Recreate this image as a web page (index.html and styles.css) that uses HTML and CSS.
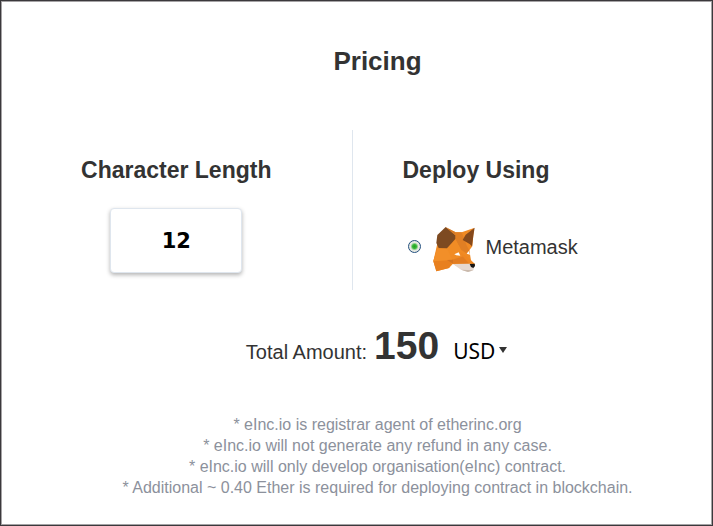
FILE: index.html
```html
<!DOCTYPE html>
<html lang="en">
<head>
    <meta charset="UTF-8">
    <meta name="viewport" content="width=device-width, initial-scale=1.0">
    <title>Pricing</title>
    <link rel="stylesheet" href="styles.css">
</head>
<body>

<main class="pricing">
    <h1 class="title">Pricing</h1>

    <div class="options">
        <div class="length">
            <h2><label for="char-length">Character Length</label></h2>
            <input class="length-input" id="char-length" type="text" value="12">
        </div>
        <div class="deploy">
            <h2>Deploy Using</h2>
            <label class="wallet">
                <input class="wallet-radio" type="radio" name="wallet" value="metamask" checked>
                <svg class="fox" viewBox="24 21 129 138" aria-hidden="true">
                    <path fill="#f08a24" d="M36 78 L63 26 L92 40 L110 40 L147 27 L142 82 L133 94 L138 124 L150 135 L146 147 L120 156 L84 134 L72 147 L34 157 L25 127 Z"/>
                    <path fill="#e07f24" d="M92 40 L110 40 L126 82 L133 94 L129 106 L108 92 L91 60 Z"/>
                    <path fill="#f18c25" d="M36 88 L66 88 L91 60 L108 92 L104 112 L84 122 L25 127 Z"/>
                    <path fill="#e8801f" d="M84 122 L25 127 L34 157 L72 147 Z"/>
                    <path fill="#f28f29" d="M25 127 L37 90 L66 88 L82 122 Z"/>
                    <path fill="#e27d22" d="M82 122 L118 111 L136 134 L84 134 Z"/>
                    <path fill="#d47422" d="M66 123 L84 122 L84 134 Z"/>
                    <path fill="#ef8722" d="M104 98 L138 124 L140 136 L134 136 L112 111 Z"/>
                    <path fill="#7d4a21" d="M62 24 L91 49 L91 60 L66 88 L41 87 L34 72 L37 48 Z"/>
                    <path fill="#85491c" d="M149 26 L145 50 L141 82 L134 75 L113 63 L122 47 Z"/>
                    <path fill="#d57a27" d="M62 24 L92 40 L91 49 Z"/>
                    <path fill="#e6d9d0" d="M84 135 L136 134 L148 143 L145 154 L129 159 L108 152 Z"/>
                    <path fill="#c9b9ac" d="M108 152 L145 154 L129 159 Z"/>
                    <path fill="#161616" d="M134 135 L149 134 L150 141 L145 147 L138 144 Z"/>
                    <path fill="#fff" d="M88 106 L101 100 L106 110 L94 109 Z"/>
                    <path fill="#fff" d="M125 104 L131 96 L135 107 Z"/>
                </svg>
                <span>Metamask</span>
            </label>
        </div>
    </div>

    <div class="total">
        <span class="total-label">Total Amount:</span>
        <strong class="total-value">150</strong>
        <span class="currency">
            <select class="currency-select" aria-label="Currency">
                <option>USD</option>
            </select>
            <svg class="caret" viewBox="0 0 8 6" aria-hidden="true"><path fill="#333" d="M0 0h8L4 6z"/></svg>
        </span>
    </div>

    <div class="notes">
        <p>* eInc.io is registrar agent of etherinc.org</p>
        <p>* eInc.io will not generate any refund in any case.</p>
        <p>* eInc.io will only develop organisation(eInc) contract.</p>
        <p>* Additional ~ 0.40 Ether is required for deploying contract in blockchain.</p>
    </div>
</main>

</body>
</html>
```

FILE: styles.css
```css
* {
    box-sizing: border-box;
}
body {
    margin: 0;
    font-family: "Liberation Sans", Arial, sans-serif;
    color: #333;
    background: #fff;
}
h1, h2, p {
    margin: 0;
}
.pricing {
    min-height: 100vh;
    padding-top: 44px;
    border: 1px solid #3b393c;
    box-shadow: inset 0 0 0 1px #a5a3a5;
}
.title {
    padding-left: 42px;
    font-size: 26px;
    line-height: 32px;
    text-align: center;
}
.options {
    display: grid;
    grid-template-columns: 1fr 1fr;
    margin-top: 53px;
    padding-right: 8px;
}
.options h2 {
    font-size: 23px;
    line-height: 32px;
}
.length {
    display: flex;
    flex-direction: column;
    align-items: center;
    gap: 22px;
    height: 160px;
    padding-top: 24px;
    border-right: 1px solid #dfe6ee;
}
.length-input {
    width: 132px;
    height: 65px;
    border: 1px solid #dfe6ee;
    border-radius: 4px;
    box-shadow: 0 2px 4px rgba(0, 0, 0, 0.3);
    background: #fff;
    color: #000;
    font-family: "DejaVu Sans", Verdana, sans-serif;
    font-size: 21px;
    font-weight: bold;
    text-align: center;
}
.deploy {
    padding: 24px 0 0 50px;
}
.wallet {
    display: flex;
    align-items: center;
    margin-top: 40px;
    padding-left: 5px;
    font-size: 20px;
}
.wallet-radio {
    appearance: none;
    width: 13px;
    height: 13px;
    margin: 0 12px 6px 0;
    border: 1px solid #24507f;
    border-radius: 50%;
    background: radial-gradient(circle, #21a121 0, #38b738 2px, #e6e9e2 4px);
}
.fox {
    width: 43px;
    height: 46px;
    margin-right: 10px;
}
.wallet span {
    margin-bottom: 3px;
}
.total {
    display: flex;
    align-items: baseline;
    justify-content: center;
    margin-top: 32px;
    padding-left: 40px;
}
.total-label {
    font-size: 20px;
}
.total-value {
    margin: 0 14px 0 7px;
    font-size: 39px;
    line-height: 48px;
}
.currency {
    display: flex;
    align-items: center;
    gap: 3px;
}
.currency-select {
    appearance: none;
    padding: 0;
    border: 0;
    background: none;
    color: #000;
    font-family: "Noto Sans", Tahoma, sans-serif;
    font-size: 21px;
}
.caret {
    width: 8px;
    height: 6px;
    margin-bottom: 2px;
}
.notes {
    margin-top: 44px;
    padding-left: 42px;
    color: #8c919c;
    font-size: 16px;
    line-height: 21px;
    text-align: center;
}
```
